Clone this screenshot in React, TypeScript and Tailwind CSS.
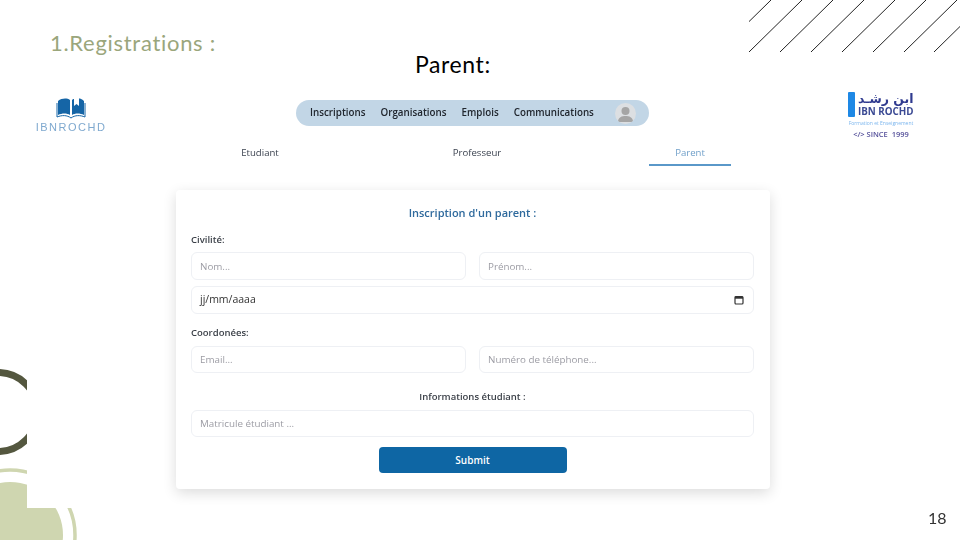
const navItems = ["Inscriptions", "Organisations", "Emplois", "Communications"];

const fieldClass =
  "h-full w-full rounded-[6px] border border-[#eef0f4] bg-white px-2 text-[9.800px] text-[#333] outline-none placeholder:text-[#9c9ca4]";

function Decorations() {
  return (
    <>
      {/* hatching top right */}
      <svg className="absolute right-0 top-0" width="211" height="52" viewBox="749 0 211 52">
        {[-31, 0, 31, 62, 93, 124, 155, 185].map((x) => (
          <line key={x} x1={749 + x} y1={52} x2={749 + x + 53} y2={0} stroke="#222" strokeWidth="1" />
        ))}
      </svg>
      {/* dark ring */}
      <svg className="absolute left-0 top-[360px]" width="27" height="100" viewBox="0 360 27 100">
        <circle cx="-2" cy="412" r="39.5" fill="none" stroke="#54573f" strokeWidth="7" />
      </svg>
      {/* green circle */}
      <svg className="absolute bottom-0 left-0" width="80" height="75" viewBox="0 465 80 75">
        <defs>
          <clipPath id="greenCut">
            <path d="M0 465H27V508H80V540H0Z" />
          </clipPath>
        </defs>
        <g clipPath="url(#greenCut)">
          <circle cx="10" cy="535" r="53" fill="#cfd6b0" />
          <circle cx="10" cy="535" r="65" fill="none" stroke="#cfd6b0" strokeWidth="3.5" />
        </g>
      </svg>
    </>
  );
}

function LeftLogo() {
  return (
    <div className="flex w-[72px] flex-col items-center">
      <svg width="30" height="22" viewBox="0 0 30 22">
        <path d="M2 3C6 0 11 0 14 2V17C11 15 6 15 2 17Z" fill="#1565a6" />
        <path d="M28 3C26 1 24 .5 23 .5V8L20.500 6 18 8V1C17 1 16.500 1.500 16 2V17C19 15 24 15 28 17Z" fill="#1565a6" />
        <path d="M1 5V19C6 17 11 17 15 20C19 17 24 17 29 19V5" fill="none" stroke="#1565a6" strokeWidth="1" />
      </svg>
      <span className="mt-[2px] whitespace-nowrap font-['Liberation_Sans',sans-serif] text-[11px] leading-[11px] tracking-[1.500px] text-[#7fa9cf]">
        IBNROCHD
      </span>
    </div>
  );
}

function RightLogo() {
  return (
    <div className="flex w-[66px] flex-col items-center">
      <div className="flex items-stretch gap-[3px] self-start">
        <div className="my-[1px] w-[7px] rounded-[1px] bg-[#1e88e5]" />
        <div className="flex flex-col items-end">
          <span dir="rtl" className="whitespace-nowrap font-['DejaVu_Sans',sans-serif] text-[12.500px] font-bold leading-[15px] text-[#2f3a8f]">
            ابن رشـد
          </span>
          <span className="whitespace-nowrap font-['Open_Sans',sans-serif] text-[9.800px] font-bold leading-[12px] text-[#3b4a94]">IBN ROCHD</span>
        </div>
      </div>
      <span className="mt-[1px] whitespace-nowrap font-['Open_Sans',sans-serif] text-[5px] leading-[8px] text-[#7cb6ee]">Formation et Enseignement</span>
      <span className="mt-[2px] whitespace-pre font-['Open_Sans',sans-serif] text-[7.500px] font-semibold leading-[10px] text-[#55509a]">
        {"</> SINCE  1999"}
      </span>
    </div>
  );
}

function Avatar() {
  return (
    <div className="flex h-[21px] w-[21px] items-center justify-center overflow-hidden rounded-full bg-[#dcdfe2]">
      <svg width="21" height="21" viewBox="0 0 21 21">
        <circle cx="10.500" cy="8" r="4" fill="#a5a5a5" />
        <path d="M3 19C3 14 7 13 10.500 13S18 14 18 19Z" fill="#a5a5a5" />
      </svg>
    </div>
  );
}

function RegisterForm() {
  return (
    <div className="ml-[176px] mt-[24px] h-[299px] w-[594px] rounded-[4px] bg-white pl-[15px] pr-[16px] pt-[15px] shadow-[0_4px_14px_rgba(0,0,0,0.14)]">
      <h2 className="text-center text-[11px] font-semibold leading-[16px] text-[#2f6a9d]">Inscription d'un parent :</h2>
      <p className="mt-[12px] text-[9.500px] font-semibold leading-[14px] text-[#3a3f47]">Civilité:</p>
      <div className="mt-[5px] grid h-[28px] grid-cols-2 gap-[13px]">
        <input className={fieldClass} placeholder="Nom..." />
        <input className={fieldClass} placeholder="Prénom..." />
      </div>
      <div className="mt-[6px] flex h-[28px] items-center justify-between rounded-[6px] border border-[#eef0f4] px-2">
        <span className="text-[10.500px] text-[#333]">jj/mm/aaaa</span>
        <svg className="mr-[1px]" width="10" height="10" viewBox="0 0 10 10">
          <rect x="1" y="1.500" width="8" height="7.500" rx="1" fill="none" stroke="#333" strokeWidth="1.200" />
          <rect x="1" y="1.500" width="8" height="2.200" fill="#333" />
        </svg>
      </div>
      <p className="mt-[12px] text-[9.500px] font-semibold leading-[14px] text-[#3a3f47]">Coordonées:</p>
      <div className="mt-[6px] grid h-[27px] grid-cols-2 gap-[13px]">
        <input className={fieldClass} placeholder="Email..." />
        <input className={fieldClass} placeholder="Numéro de téléphone..." />
      </div>
      <p className="mt-[17px] text-center text-[9.500px] font-semibold leading-[14px] text-[#3a3f47]">Informations étudiant :</p>
      <div className="mt-[5px] h-[27px]">
        <input className={fieldClass} placeholder="Matricule étudiant ..." />
      </div>
      <div className="mt-[11px] flex justify-center">
        <button className="h-[26px] w-[188px] rounded-[4px] bg-[#0e66a4] text-[10px] font-semibold text-white">Submit</button>
      </div>
    </div>
  );
}

export default function App() {
  return (
    <div className="relative h-[540px] w-[960px] overflow-hidden bg-white font-['Open_Sans',sans-serif]">
      <Decorations />

      <div className="relative h-[91px]">
        <h1 className="pl-[50px] pt-[29px] font-['Lato',sans-serif] text-[22px] leading-[28px] tracking-[0.700px] text-[#9aa67c]">
          1.Registrations :
        </h1>
        <p className="-mt-[7px] pl-[415px] font-['Lato',sans-serif] text-[23px] leading-[28px] tracking-[0.600px] text-black">Parent:</p>
      </div>

      <div className="blur-[0.3px]">
        <div className="flex h-[48px] items-start pl-[35px]">
          <div className="pt-[7px]">
            <LeftLogo />
          </div>
          <nav className="ml-[189px] mt-[9px] flex h-[26px] w-[353px] items-center rounded-full bg-[#c2d6e6] pl-[14px] pr-[13px] text-[9.800px] font-semibold text-[#20262e]">
            <div className="flex flex-1 gap-[15px] pt-[1px]">
              {navItems.map((item) => (
                <span key={item}>{item}</span>
              ))}
            </div>
            <Avatar />
          </nav>
          <div className="ml-[199px]">
            <RightLogo />
          </div>
        </div>

        <div className="flex h-[27px] text-[9.600px] text-[#3c4350]">
          <div className="ml-[218px] w-[84px] pt-[7px] text-center">Etudiant</div>
          <div className="ml-[133px] w-[84px] pt-[7px] text-center">Professeur</div>
          <div className="ml-[130px] w-[82px] border-b-2 border-[#5a98c9] pt-[7px] text-center text-[#6f9fc9]">Parent</div>
        </div>

        <RegisterForm />
      </div>

      <span className="absolute left-[928px] top-[507px] font-['Lato',sans-serif] text-[16px] leading-[22px] text-[#333]">18</span>
    </div>
  );
}
